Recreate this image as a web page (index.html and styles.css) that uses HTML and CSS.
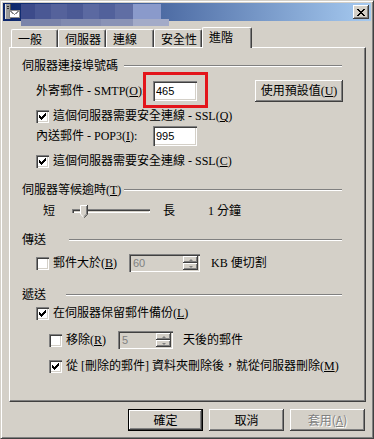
FILE: index.html
```html
<!DOCTYPE html>
<html lang="zh-Hant">
<head>
    <meta charset="UTF-8">
    <title>內容</title>
    <link rel="stylesheet" href="styles.css">
</head>
<body>
    <div class="window">
        <!-- Barra de título -->
        <div class="titlebar">
            <svg class="app-icon" width="16" height="16" viewBox="0 0 16 16" shape-rendering="crispEdges">
                <rect x="1" y="0" width="6" height="15" fill="#9a9a9a"/>
                <rect x="1" y="0" width="1" height="15" fill="#e0e0e0"/>
                <rect x="6" y="0" width="1" height="15" fill="#505050"/>
                <rect x="3" y="2" width="2" height="1" fill="#303030"/>
                <rect x="3" y="4" width="2" height="1" fill="#303030"/>
                <rect x="5" y="6" width="11" height="8" fill="#fff"/>
                <path d="M5.5 6.5h10v7h-10z" fill="none" stroke="#8a8a8a"/>
                <path d="M5.5 6.5l5 4 5-4" fill="none" stroke="#8a8a8a"/>
            </svg>
            <button class="close-btn">
                <svg width="8" height="7" viewBox="0 0 8 7" shape-rendering="crispEdges">
                    <path d="M0 0h2v1h1v1h2v-1h1v-1h2v1h-1v1h-1v1h-1v1h1v1h1v1h1v1h-2v-1h-1v-1h-2v1h-1v1h-2v-1h1v-1h1v-1h1v-1h-1v-1h-1v-1h-1z" fill="#000"/>
                </svg>
            </button>
        </div>
        <div class="title-blur"></div>

        <!-- Pestañas -->
        <div class="tabs">
            <div class="tab tab-first">一般</div>
            <div class="tab">伺服器</div>
            <div class="tab">連線</div>
            <div class="tab">安全性</div>
            <div class="tab active">進階</div>
        </div>

        <div class="panel">
            <!-- 連接埠 -->
            <div class="group-title"><span class="title-text wide">伺服器連接埠號碼</span><i class="etch"></i></div>
            <div class="row indent mt-8">
                <span class="field-label">外寄郵件 - SMTP(<u>O</u>):</span>
                <span class="port">
                    <input class="textbox" type="text" value="465">
                    <span class="highlight"></span>
                </span>
                <button class="btn btn-defaults">使用預設值(<u>U</u>)</button>
            </div>
            <div class="row indent mt-5">
                <span class="check on"><svg width="7" height="7" viewBox="0 0 7 7" shape-rendering="crispEdges"><path d="M0 2H1V3H2V4H3V3H4V2H5V1H6V0H7V3H6V4H5V5H4V6H3V7H2V6H1V5H0Z"/></svg></span>
                <span>這個伺服器需要安全連線 - SSL(<u>Q</u>)</span>
            </div>
            <div class="row indent">
                <span class="field-label">內送郵件 - POP3(<u>I</u>):</span>
                <input class="textbox" type="text" value="995">
            </div>
            <div class="row indent mt-5">
                <span class="check on"><svg width="7" height="7" viewBox="0 0 7 7" shape-rendering="crispEdges"><path d="M0 2H1V3H2V4H3V3H4V2H5V1H6V0H7V3H6V4H5V5H4V6H3V7H2V6H1V5H0Z"/></svg></span>
                <span>這個伺服器需要安全連線 - SSL(<u>C</u>)</span>
            </div>

            <!-- 逾時 -->
            <div class="group-title mt-12"><span class="title-text wide">伺服器等候逾時(<u>T</u>)</span><i class="etch"></i></div>
            <div class="row slider-row mt-4">
                <span>短</span>
                <span class="slider">
                    <svg class="thumb" width="8" height="13" viewBox="0 0 8 13">
                        <path d="M0 0h8v9l-4 4-4-4z" fill="#d4d0c8"/>
                        <path d="M.5 9.2V.5H7" fill="none" stroke="#fff"/>
                        <path d="M7.5 0v9.3L4 12.8" fill="none" stroke="#404040"/>
                        <path d="M6.5 1v8L4 11.5" fill="none" stroke="#808080"/>
                        <path d="M.7 9.3L3.6 12.2" fill="none" stroke="#fff"/>
                    </svg>
                </span>
                <span class="slider-long">長</span>
                <span class="slider-value">1 分鐘</span>
            </div>

            <!-- 傳送 -->
            <div class="group-title mt-12"><span class="title-text">傳送</span><i class="etch etch-send"></i></div>
            <div class="row indent mt-6">
                <span class="check"></span>
                <span class="size-label">郵件大於(<u>B</u>)</span>
                <span class="spin spin-size">
                    <span class="spin-value">60</span>
                    <span class="spin-buttons"><span class="spin-btn up"></span><span class="spin-btn down"></span></span>
                </span>
                <span class="after-spin">KB 便切割</span>
            </div>

            <!-- 遞送 -->
            <div class="group-title mt-15"><span class="title-text">遞送</span><i class="etch etch-deliver"></i></div>
            <div class="row indent mt-1">
                <span class="check on"><svg width="7" height="7" viewBox="0 0 7 7" shape-rendering="crispEdges"><path d="M0 2H1V3H2V4H3V3H4V2H5V1H6V0H7V3H6V4H5V5H4V6H3V7H2V6H1V5H0Z"/></svg></span>
                <span>在伺服器保留郵件備份(<u>L</u>)</span>
            </div>
            <div class="row indent-2 mt-7">
                <span class="check"></span>
                <span class="remove-label">移除(<u>R</u>)</span>
                <span class="spin spin-days">
                    <span class="spin-value">5</span>
                    <span class="spin-buttons"><span class="spin-btn up"></span><span class="spin-btn down"></span></span>
                </span>
                <span class="after-days">天後的郵件</span>
            </div>
            <div class="row indent-2 mt-6">
                <span class="check on"><svg width="7" height="7" viewBox="0 0 7 7" shape-rendering="crispEdges"><path d="M0 2H1V3H2V4H3V3H4V2H5V1H6V0H7V3H6V4H5V5H4V6H3V7H2V6H1V5H0Z"/></svg></span>
                <span>從 [刪除的郵件] 資料夾刪除後，就從伺服器刪除(<u>M</u>)</span>
            </div>
        </div>

        <!-- Botones -->
        <div class="actions">
            <button class="btn btn-action default">確定</button>
            <button class="btn btn-action">取消</button>
            <button class="btn btn-action" disabled>套用(<u>A</u>)</button>
        </div>
    </div>
</body>
</html>
```

FILE: styles.css
```css
* {
    box-sizing: border-box;
}
body {
    margin: 0;
    background: #d4d0c8;
    font: 12px/14px "Liberation Serif", "Noto Sans CJK TC", serif;
    color: #000;
}
u {
    text-decoration: underline;
    text-underline-offset: 1px;
}
.window {
    position: relative;
    width: 374px;
    height: 439px;
    padding: 2px;
    background: #d4d0c8;
    border: 1px solid;
    border-color: #d4d0c8 #404040 #404040 #d4d0c8;
    box-shadow: inset 1px 1px #fff, inset -1px -1px #808080;
}
/* Barra de título */
.titlebar {
    height: 18px;
    display: flex;
    align-items: center;
    justify-content: space-between;
    padding: 0 2px 0 1px;
    background: linear-gradient(to right, #0a246a, #a6caf0);
}
.app-icon {
    display: block;
}
.close-btn {
    width: 16px;
    height: 14px;
    padding: 0;
    border: none;
    background: #d4d0c8;
    box-shadow: inset -1px -1px #404040, inset 1px 1px #fff, inset -2px -2px #808080;
    display: flex;
    align-items: center;
    justify-content: center;
}
.close-btn svg {
    display: block;
}
.title-blur {
    position: absolute;
    left: 20px;
    top: 3px;
    width: 148px;
    height: 22px;
    background:
        linear-gradient(to right, #7a83aa 0 40px, #828bb0 40px 80px, #8a93b6 80px 112px, #a3abc8 112px) bottom / 100% 7px no-repeat,
        linear-gradient(to right, #3d4b8a 0 14px, #4a5894 14px 30px, #55629b 30px 46px, #4c5a95 46px 62px, #5b69a1 62px 78px, #52619b 78px 94px, #606ea4 94px 112px, #8a9acb 112px 140px, transparent 140px) top / 100% 15px no-repeat;
}
/* Pestañas */
.tabs {
    display: flex;
    height: 20px;
    margin: 6px 0 0 8px;
    font-family: "Noto Sans CJK TC", sans-serif;
}
.tab {
    width: 48px;
    height: 18px;
    margin-top: 2px;
    padding: 2px 0 0 6px;
    line-height: 14px;
    border-left: 1px solid #fff;
    border-top: 1px solid #fff;
    border-right: 1px solid #404040;
    border-radius: 2px 2px 0 0;
    box-shadow: inset -1px 0 #808080;
}
.tab-first {
    width: 47px;
}
.tab.active {
    position: relative;
    z-index: 1;
    width: 50px;
    height: 21px;
    margin: 0 0 -1px 0;
    background: #d4d0c8;
}
.panel {
    width: 357px;
    height: 355px;
    margin-left: 6px;
    padding: 11px 0 0 12px;
    border: 1px solid;
    border-color: #fff #404040 #404040 #fff;
    box-shadow: inset -1px -1px #808080;
}
/* Grupos */
.group-title {
    display: flex;
    align-items: center;
    height: 14px;
    margin-right: 23px;
}
.title-text.wide {
    width: 102px;
}
.etch {
    flex: 1;
    height: 2px;
    border-top: 1px solid #808080;
    border-bottom: 1px solid #fff;
}
.etch-send {
    margin-left: 23px;
}
.etch-deliver {
    margin-left: 20px;
}
.row {
    display: flex;
    align-items: center;
    height: 20px;
}
.indent {
    padding-left: 14px;
}
.indent-2 {
    padding-left: 27px;
}
.mt-1 { margin-top: 1px; }
.mt-4 { margin-top: 4px; }
.mt-5 { margin-top: 5px; }
.mt-6 { margin-top: 6px; }
.mt-7 { margin-top: 7px; }
.mt-8 { margin-top: 8px; }
.mt-12 { margin-top: 12px; }
.mt-15 { margin-top: 15px; }
.field-label {
    width: 117px;
}
.textbox {
    width: 44px;
    height: 20px;
    padding: 0 3px;
    border: none;
    outline: none;
    background: #fff;
    font: 11px "Liberation Sans", sans-serif;
    box-shadow: inset 1px 1px #808080, inset 2px 2px #404040, inset -1px -1px #fff, inset -2px -2px #d4d0c8;
}
.port {
    position: relative;
    display: flex;
}
.highlight {
    position: absolute;
    left: -10px;
    top: -9px;
    width: 65px;
    height: 36px;
    border: 3px solid #e3151b;
}
.btn {
    height: 22px;
    padding: 0;
    border: none;
    background: #d4d0c8;
    color: #000;
    font: 12px/14px "Noto Sans CJK TC", sans-serif;
    box-shadow: inset -1px -1px #404040, inset 1px 1px #fff, inset -2px -2px #808080;
}
.btn-defaults {
    width: 88px;
    margin-left: 58px;
    font-family: "Liberation Serif", "Noto Sans CJK TC", serif;
}
.btn.default {
    border: 1px solid #000;
}
.btn:disabled {
    color: #808080;
    text-shadow: 1px 1px #fff;
}
/* Casillas */
.check {
    width: 13px;
    height: 13px;
    margin-right: 4px;
    flex: none;
    background: #fff;
    display: flex;
    align-items: center;
    justify-content: center;
    box-shadow: inset 1px 1px #808080, inset 2px 2px #404040, inset -1px -1px #fff, inset -2px -2px #d4d0c8;
}
.check svg {
    display: block;
}
/* Deslizador */
.slider-row {
    padding-left: 21px;
}
.slider {
    position: relative;
    width: 78px;
    height: 4px;
    margin-left: 17px;
    box-shadow: inset 1px 1px #808080, inset 2px 2px #404040, inset -1px -1px #fff, inset -2px -2px #d4d0c8;
}
.thumb {
    position: absolute;
    left: 8px;
    top: -4px;
}
.slider-long {
    margin-left: 13px;
}
.slider-value {
    margin-left: 33px;
}
/* Campos numéricos */
.size-label {
    width: 76px;
}
.remove-label {
    width: 52px;
}
.spin {
    display: flex;
    height: 18px;
    padding: 2px;
    background: #d4d0c8;
    box-shadow: inset 1px 1px #808080, inset 2px 2px #404040, inset -1px -1px #fff, inset -2px -2px #d4d0c8;
}
.spin-size {
    width: 71px;
}
.spin-days {
    width: 55px;
}
.spin-value {
    flex: 1;
    padding-left: 2px;
    color: #808080;
    font: 11px/14px "Liberation Sans", sans-serif;
}
.spin-buttons {
    width: 15px;
    display: flex;
    flex-direction: column;
}
.spin-btn {
    flex: 1;
    display: flex;
    align-items: center;
    justify-content: center;
    box-shadow: inset -1px -1px #404040, inset 1px 1px #fff, inset -2px -2px #808080;
}
.spin-btn::after {
    content: "";
    border-left: 2px solid transparent;
    border-right: 2px solid transparent;
}
.spin-btn.up::after {
    border-bottom: 2px solid #808080;
}
.spin-btn.down::after {
    border-top: 2px solid #808080;
}
.after-spin {
    margin-left: 11px;
}
.after-days {
    margin-left: 10px;
}
/* Botones inferiores */
.actions {
    display: flex;
    justify-content: flex-end;
    gap: 6px;
    margin: 7px 6px 0 0;
}
.btn-action {
    width: 75px;
}
```
